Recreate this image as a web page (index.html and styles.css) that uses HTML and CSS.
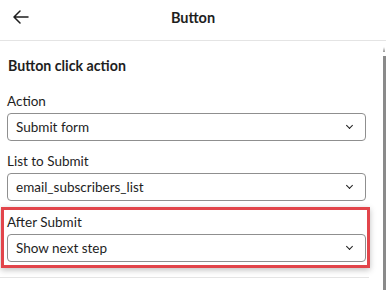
FILE: index.html
```html
<!DOCTYPE html>
<html lang="en">
<head>
<meta charset="UTF-8">
<meta name="viewport" content="width=device-width,initial-scale=1.0">
<title>Button</title>
<link rel="stylesheet" href="styles.css">
</head>
<body>

<!-- ===== Header ===== -->
<header class="topbar">
  <button class="back" aria-label="Back">
    <svg width="16" height="14" viewBox="0 0 16 14" fill="none" stroke="#1e1e1e" stroke-width="1.5" stroke-linecap="round" stroke-linejoin="round">
      <path d="M15 7H1.5M7 1L1 7l6 6"/>
    </svg>
  </button>
  <strong class="title">Button</strong>
</header>

<!-- ===== Panel ===== -->
<div class="panel">
  <main class="content">
    <h3 class="section-title">Button click action</h3>

    <div class="field">
      <label>Action</label>
      <div class="select"><span>Submit form</span><i class="chev"></i></div>
    </div>

    <div class="field">
      <label>List to Submit</label>
      <div class="select"><span>email_subscribers_list</span><i class="chev"></i></div>
    </div>

    <div class="field highlight">
      <label>After Submit</label>
      <div class="select"><span>Show next step</span><i class="chev"></i></div>
    </div>

    <div class="divider"></div>
  </main>
  <div class="scrollbar"><span class="arrow"></span><span class="thumb"></span></div>
</div>

</body>
</html>
```

FILE: styles.css
```css
:root{
  --text:#1e1e1e;
  --line:#e4e4e4;
  --field:#8f8f8f;
  --red:#e2454b;
  font-family:'Lato','Noto Sans',sans-serif;
}
*{box-sizing:border-box}
html,body{margin:0;padding:0;background:#fff;color:var(--text);height:100%;overflow:hidden}

/* ===== Header ===== */
.topbar{
  height:41px;border-bottom:1px solid var(--line);
  display:flex;align-items:center;justify-content:center;
  position:relative;padding-bottom:4px
}
.topbar .title{font-size:14.5px;font-weight:700;line-height:18px}
.back{
  position:absolute;left:13px;top:10px;
  background:none;border:none;padding:0;cursor:pointer;display:flex
}

/* ===== Panel ===== */
.panel{display:flex;height:calc(100% - 41px)}
.content{flex:1;padding:16px 17px 0 7px}
.section-title{
  margin:0 0 17px 1px;font-size:14.2px;font-weight:700;line-height:18px
}
.field{display:flex;flex-direction:column;margin-bottom:11px}
.field label{font-size:13.5px;line-height:18px;margin-bottom:3px}
.select{
  height:28px;border:1px solid var(--field);border-radius:4px;
  display:flex;align-items:center;justify-content:space-between;
  padding:0 13px 0 8px;font-size:13.5px
}
.chev{
  width:5px;height:5px;border-right:1.4px solid var(--text);
  border-bottom:1.4px solid var(--text);transform:rotate(45deg);margin-top:-3px
}

.field.highlight{
  margin:-5px -4px 0 -6px;padding:3px 1px 3px 3px;
  border:3px solid var(--red);
  box-shadow:0 2px 6px rgba(0,0,0,.25)
}
.divider{height:1px;background:var(--line);margin:9px -3px 0 -7px}

.scrollbar{width:3px;display:flex;flex-direction:column;padding-top:6px}
.scrollbar .arrow{
  width:0;height:0;border-left:1.5px solid transparent;border-right:1.5px solid transparent;
  border-bottom:5px solid #9a9a9a;margin-bottom:4px
}
.scrollbar .thumb{flex:1;background:#8a8a8a}
```
